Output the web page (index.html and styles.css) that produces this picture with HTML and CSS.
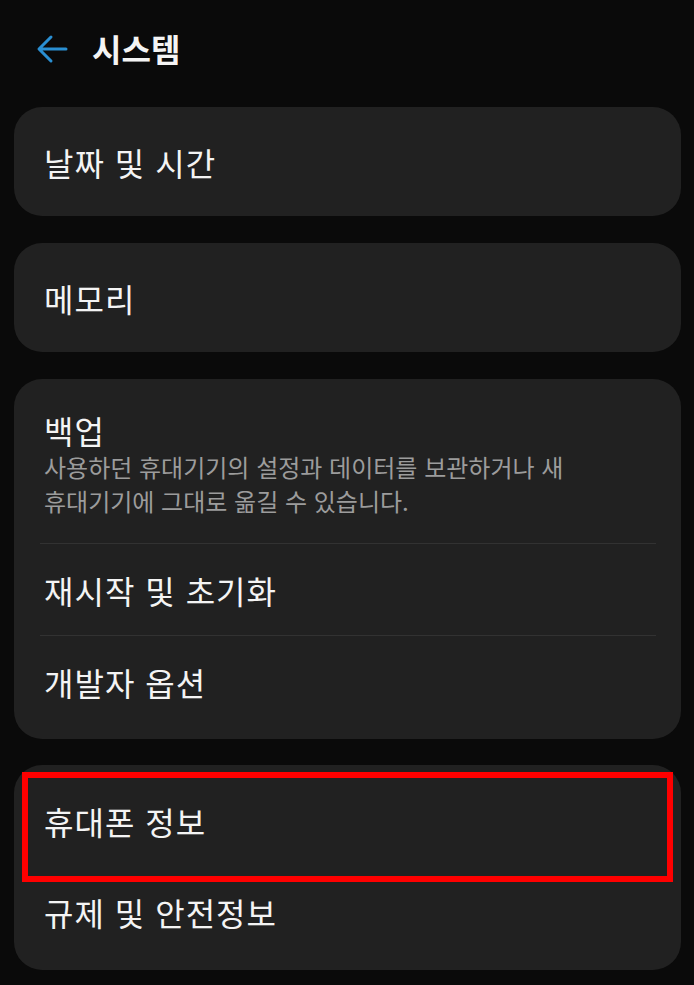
FILE: index.html
```html
<!DOCTYPE html>
<html lang="ko">
<head>
    <meta charset="UTF-8">
    <meta name="viewport" content="width=device-width, initial-scale=1.0">
    <title>시스템</title>
    <link rel="stylesheet" href="styles.css">
</head>
<body>
    <div class="screen">
        <div class="header">
            <svg class="back" width="32" height="30" viewBox="0 0 32 30">
                <path d="M30 15 H4 M15 3 L3 15 L15 27" fill="none" stroke="#2a8fd2" stroke-width="3" stroke-linecap="round" stroke-linejoin="round"/>
            </svg>
            <h1>시스템</h1>
        </div>

        <div class="card single">
            <div class="item">날짜 및 시간</div>
        </div>

        <div class="card single">
            <div class="item">메모리</div>
        </div>

        <div class="card">
            <div class="item backup">
                <div class="title">백업</div>
                <div class="desc">사용하던 휴대기기의 설정과 데이터를 보관하거나 새<br>휴대기기에 그대로 옮길 수 있습니다.</div>
            </div>
            <div class="item line">재시작 및 초기화</div>
            <div class="item line">개발자 옵션</div>
        </div>

        <div class="card last">
            <div class="item">휴대폰 정보</div>
            <div class="item">규제 및 안전정보</div>
            <div class="mark"></div>
        </div>
    </div>
</body>
</html>
```

FILE: styles.css
```css
body {
    margin: 0;
    background-color: #0a0a0a;
    font-family: "Noto Sans CJK KR", "Noto Sans", sans-serif;
    color: #f4f4f4;
}
.screen {
    width: 694px;
    height: 985px;
    padding: 0 13px 0 14px;
    box-sizing: border-box;
    overflow: hidden;
}
.header {
    height: 107px;
    display: flex;
    align-items: flex-start;
    padding-top: 31px;
    box-sizing: border-box;
}
.back {
    margin: 3px 0 0 22px;
}
h1 {
    margin: 0 0 0 24px;
    font-size: 32px;
    font-weight: 700;
    line-height: 34px;
}
.card {
    position: relative;
    background-color: #212121;
    border-radius: 28px;
    padding: 10px 0 12px;
    margin-bottom: 26px;
}
.card.single {
    padding: 10px 0;
    margin-bottom: 27px;
}
.card.single + .card:not(.single) {
    margin-top: 2px;
}
.item {
    height: 91px;
    display: flex;
    align-items: center;
    margin: 0 25px 0 26px;
    padding: 0 4px;
    font-size: 32px;
    letter-spacing: 1px;
}
.card.single .item {
    height: 89px;
}
.line {
    border-top: 1px solid #323232;
}
.backup {
    height: 154px;
    flex-direction: column;
    align-items: flex-start;
    justify-content: flex-start;
    padding-top: 21px;
    box-sizing: border-box;
}
.backup .title {
    line-height: 40px;
}
.backup .desc {
    font-size: 24px;
    line-height: 34px;
    color: #9c9c9c;
    letter-spacing: 0;
}
.card.last {
    padding-bottom: 13px;
    margin-bottom: 0;
}
.mark {
    position: absolute;
    left: 8px;
    top: 7px;
    width: 651px;
    height: 110px;
    border: 6px solid #ff0000;
    box-sizing: border-box;
}
```
